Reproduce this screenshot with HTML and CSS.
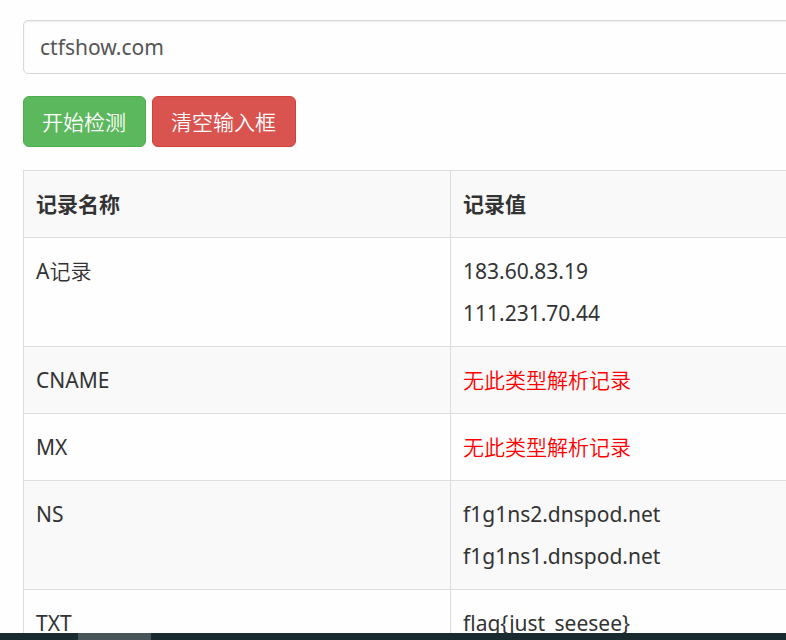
FILE: index.html
```html
<!DOCTYPE html>
<html lang="zh-CN">
<head>
<meta charset="utf-8">
<title>ctfshow.com</title>
<link rel="stylesheet" href="styles.css">
</head>
<body>
<main class="page">
  <form class="query">
    <input class="domain" type="text" value="ctfshow.com" aria-label="ctfshow.com">
    <div class="actions">
      <button class="btn btn-success" type="button">开始检测</button>
      <button class="btn btn-danger" type="reset">清空输入框</button>
    </div>
  </form>
  <table class="records">
    <thead>
      <tr><th class="name" scope="col">记录名称</th><th scope="col">记录值</th></tr>
    </thead>
    <tbody>
      <tr><td>A<span class="light">记录</span></td><td>183.60.83.19<br>111.231.70.44</td></tr>
      <tr><td>CNAME</td><td class="light empty">无此类型解析记录</td></tr>
      <tr><td>MX</td><td class="light empty">无此类型解析记录</td></tr>
      <tr><td>NS</td><td>f1g1ns2.dnspod.net<br>f1g1ns1.dnspod.net</td></tr>
      <tr><td>TXT</td><td>flag{just_seesee}</td></tr>
    </tbody>
  </table>
</main>
<footer class="taskbar"><div class="task"></div></footer>
</body>
</html>
```
FILE: styles.css
```css
* {
  box-sizing: border-box;
}

body {
  display: flex;
  flex-direction: column;
  height: 100vh;
  margin: 0;
  overflow: hidden;
  background: #fefefe;
  color: #333;
  font: 21px/42px "Noto Sans", "Noto Sans CJK SC", sans-serif;
}

.page {
  flex: 1;
  min-height: 0;
  margin-right: -24px;
  padding: 20px 0 0 23px;
  overflow: hidden;
}

.domain {
  display: block;
  width: 100%;
  height: 54px;
  padding: 0 16px;
  border: 1px solid #d8d8d8;
  border-radius: 5px;
  background: #fefefe;
  box-shadow: inset 0 1px 2px rgba(0, 0, 0, 0.08);
  color: #555;
  font: inherit;
}

.actions {
  display: flex;
  gap: 6px;
  margin: 22px 0 23px;
}

.btn {
  height: 51px;
  padding: 0 19px 0 18px;
  border: 1px solid;
  border-radius: 6px;
  color: #fff;
  font: inherit;
  font-weight: 350;
  line-height: 48px;
}

.btn-success {
  border-color: #4cae4c;
  background: #5cb85c;
}

.btn-danger {
  border-color: #d43f3a;
  background: #d9534f;
}

.records {
  width: 100%;
  border-collapse: collapse;
  table-layout: fixed;
}

.name {
  width: 427px;
}

th,
td {
  padding: 12px;
  border: 1px solid #ddd;
  text-align: left;
  vertical-align: top;
}

thead tr,
tbody tr:nth-child(even) {
  background: #f9f9f9;
}

.light {
  font-weight: 350;
}

.empty {
  color: #f00;
}

.taskbar {
  flex: none;
  height: 7px;
  padding-left: 78px;
  background: #1a2b2f;
}

.task {
  width: 73px;
  height: 100%;
  background: #475558;
}
```
